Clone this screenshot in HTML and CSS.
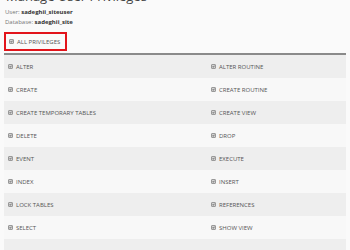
FILE: index.html
```html
<!DOCTYPE html>
<html lang="en">
<head>
  <meta charset="UTF-8">
  <title>Manage User Privileges</title>
  <link rel="stylesheet" href="styles.css">
</head>
<body>
  <main class="page">
    <h1 class="title">Manage User Privileges</h1>
    <p class="meta">User: <b>sadeghii_siteuser</b></p>
    <p class="meta">Database: <b>sadeghii_site</b></p>

    <label class="all-box">
      <span class="cb"><svg viewBox="0 0 6 6"><path d="M1.2 3.2 L2.5 4.5 L4.9 1.5" /></svg></span>
      ALL PRIVILEGES
    </label>

    <div class="privs">
      <div class="row">
        <label class="cell"><span class="cb"><svg viewBox="0 0 6 6"><path d="M1.2 3.2 L2.5 4.5 L4.9 1.5" /></svg></span>ALTER</label>
        <label class="cell"><span class="cb"><svg viewBox="0 0 6 6"><path d="M1.2 3.2 L2.5 4.5 L4.9 1.5" /></svg></span>ALTER ROUTINE</label>
      </div>
      <div class="row">
        <label class="cell"><span class="cb"><svg viewBox="0 0 6 6"><path d="M1.2 3.2 L2.5 4.5 L4.9 1.5" /></svg></span>CREATE</label>
        <label class="cell"><span class="cb"><svg viewBox="0 0 6 6"><path d="M1.2 3.2 L2.5 4.5 L4.9 1.5" /></svg></span>CREATE ROUTINE</label>
      </div>
      <div class="row">
        <label class="cell"><span class="cb"><svg viewBox="0 0 6 6"><path d="M1.2 3.2 L2.5 4.5 L4.9 1.5" /></svg></span>CREATE TEMPORARY TABLES</label>
        <label class="cell"><span class="cb"><svg viewBox="0 0 6 6"><path d="M1.2 3.2 L2.5 4.5 L4.9 1.5" /></svg></span>CREATE VIEW</label>
      </div>
      <div class="row">
        <label class="cell"><span class="cb"><svg viewBox="0 0 6 6"><path d="M1.2 3.2 L2.5 4.5 L4.9 1.5" /></svg></span>DELETE</label>
        <label class="cell"><span class="cb"><svg viewBox="0 0 6 6"><path d="M1.2 3.2 L2.5 4.5 L4.9 1.5" /></svg></span>DROP</label>
      </div>
      <div class="row">
        <label class="cell"><span class="cb"><svg viewBox="0 0 6 6"><path d="M1.2 3.2 L2.5 4.5 L4.9 1.5" /></svg></span>EVENT</label>
        <label class="cell"><span class="cb"><svg viewBox="0 0 6 6"><path d="M1.2 3.2 L2.5 4.5 L4.9 1.5" /></svg></span>EXECUTE</label>
      </div>
      <div class="row">
        <label class="cell"><span class="cb"><svg viewBox="0 0 6 6"><path d="M1.2 3.2 L2.5 4.5 L4.9 1.5" /></svg></span>INDEX</label>
        <label class="cell"><span class="cb"><svg viewBox="0 0 6 6"><path d="M1.2 3.2 L2.5 4.5 L4.9 1.5" /></svg></span>INSERT</label>
      </div>
      <div class="row">
        <label class="cell"><span class="cb"><svg viewBox="0 0 6 6"><path d="M1.2 3.2 L2.5 4.5 L4.9 1.5" /></svg></span>LOCK TABLES</label>
        <label class="cell"><span class="cb"><svg viewBox="0 0 6 6"><path d="M1.2 3.2 L2.5 4.5 L4.9 1.5" /></svg></span>REFERENCES</label>
      </div>
      <div class="row">
        <label class="cell"><span class="cb"><svg viewBox="0 0 6 6"><path d="M1.2 3.2 L2.5 4.5 L4.9 1.5" /></svg></span>SELECT</label>
        <label class="cell"><span class="cb"><svg viewBox="0 0 6 6"><path d="M1.2 3.2 L2.5 4.5 L4.9 1.5" /></svg></span>SHOW VIEW</label>
      </div>
      <div class="row last">
        <label class="cell"><span class="cb"><svg viewBox="0 0 6 6"><path d="M1.2 3.2 L2.5 4.5 L4.9 1.5" /></svg></span></label>
        <label class="cell"><span class="cb"><svg viewBox="0 0 6 6"><path d="M1.2 3.2 L2.5 4.5 L4.9 1.5" /></svg></span></label>
      </div>
    </div>
  </main>
</body>
</html>
```

FILE: styles.css
```css
body {
  margin: 0;
  background-color: #fafafa;
  font-family: 'Open Sans', sans-serif;
  color: #555;
  overflow: hidden;
}

.page {
  padding: 0 4px;
}

.title {
  margin: -15px 0 0 2px;
  font-size: 13px;
  font-weight: normal;
  line-height: 22px;
  color: #444;
}

.meta {
  margin: 0 0 0 1px;
  font-size: 6px;
  line-height: 10px;
  color: #777;
}

.meta b {
  color: #333;
}

.all-box {
  display: inline-flex;
  align-items: center;
  gap: 3px;
  margin-top: 3px;
  height: 15px;
  padding: 0 5px 0 3px;
  border: 2px solid #e2141b;
  font-size: 6px;
  white-space: nowrap;
  color: #555;
}

.cb {
  display: inline-flex;
  align-items: center;
  justify-content: center;
  box-sizing: border-box;
  flex: none;
  width: 5px;
  height: 5px;
  background-color: #d4d4d4;
  border: 0.5px solid #999;
  border-radius: 1px;
}

.cb svg {
  width: 5px;
  height: 5px;
}

.cb path {
  fill: none;
  stroke: #222;
  stroke-width: 1.2;
}

.privs {
  margin-top: 2px;
  border-top: 2px solid #8a8a8a;
}

.row {
  display: grid;
  grid-template-columns: 203px 1fr;
  height: 23px;
  align-items: center;
}

.row:nth-child(odd) {
  background-color: #eeeeee;
}

.row:nth-child(even) {
  background-color: #f8f8f8;
}

.row.last {
  align-items: start;
}

.row.last .cell {
  padding-top: 13px;
}

.cell {
  display: flex;
  align-items: center;
  gap: 3px;
  padding-left: 4px;
  font-size: 6px;
  white-space: nowrap;
  color: #555;
}
```
